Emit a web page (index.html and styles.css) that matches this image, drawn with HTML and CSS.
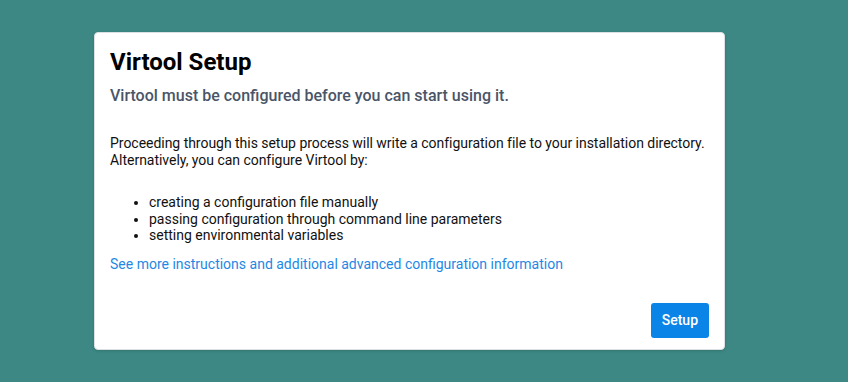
FILE: index.html
```html
<!DOCTYPE html>
<html lang="en">
<head>
    <meta charset="UTF-8">
    <meta name="viewport" content="width=device-width, initial-scale=1.0">
    <title>Virtool Setup</title>
    <link rel="stylesheet" href="styles.css">
</head>
<body>
    <div class="setup-card">
        <div class="setup-header">
            <h1>Virtool Setup</h1>
            <p class="subtitle">Virtool must be configured before you can start using it.</p>
        </div>

        <div class="setup-body">
            <p>
                Proceeding through this setup process will write a configuration file to your installation directory.
                Alternatively, you can configure Virtool by:
            </p>
            <ul>
                <li>creating a configuration file manually</li>
                <li>passing configuration through command line parameters</li>
                <li>setting environmental variables</li>
            </ul>
            <a href="#" class="more-link">See more instructions and additional advanced configuration information</a>
        </div>

        <div class="setup-footer">
            <button class="btn btn-primary">Setup</button>
        </div>
    </div>
</body>
</html>
```

FILE: styles.css
```css
* {
    margin: 0;
    padding: 0;
    box-sizing: border-box;
}

body {
    font-family: Roboto, 'Liberation Sans', sans-serif;
    font-size: 14px;
    color: #111;
    background: #3d8884;
    min-height: 100vh;
    padding: 32px 0 0 94px;
}

.setup-card {
    width: 631px;
    background: #fff;
    border: 1px solid #dcdfe3;
    border-radius: 4px;
    padding: 15px 15px 11px;
    box-shadow: 0 1px 3px rgba(0, 0, 0, 0.15);
}

.setup-header h1 {
    font-size: 24px;
    font-weight: 700;
    line-height: 28px;
    color: #000;
}

.setup-header .subtitle {
    margin-top: 10px;
    font-size: 16px;
    font-weight: 500;
    line-height: 19px;
    color: #4a5568;
}

.setup-body {
    margin-top: 30px;
}

.setup-body p {
    line-height: 16.5px;
    letter-spacing: -0.03px;
}

.setup-body ul {
    margin: 26px 0 12px;
    padding-left: 39px;
    line-height: 16.5px;
}

.more-link {
    display: block;
    color: #1e88e5;
    text-decoration: none;
    line-height: 17px;
}

.setup-footer {
    display: flex;
    justify-content: flex-end;
    margin-top: 30px;
}

.btn {
    padding: 0 11px;
    height: 35px;
    border: none;
    border-radius: 3px;
    font-family: inherit;
    font-size: 14px;
    font-weight: 500;
    cursor: pointer;
}

.btn-primary {
    background: #0b84e8;
    color: #fff;
}
```
